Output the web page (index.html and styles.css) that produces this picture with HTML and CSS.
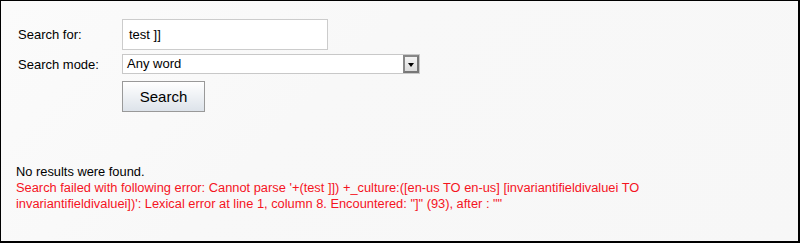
FILE: index.html
```html
<!DOCTYPE html>
<html>
<head>
<meta charset="utf-8">
<link rel="stylesheet" href="styles.css">
</head>
<body>
<div class="frame">
  <div class="form">
    <label class="lbl lbl-for">Search for:</label>
    <div class="textbox">test ]]</div>
    <label class="lbl lbl-mode">Search mode:</label>
    <div class="select">
      <span class="select-text">Any word</span>
      <span class="select-btn"><span class="arrow"></span></span>
    </div>
    <div class="spacer"></div>
    <button class="btn">Search</button>
  </div>
  <div class="results">
    <div class="none">No results were found.</div>
    <div class="error">Search failed with following error: Cannot parse '+(test ]]) +_culture:([en-us TO en-us] [invariantifieldivaluei TO invariantifieldivaluei])': Lexical error at line 1, column 8. Encountered: "]" (93), after : ""</div>
  </div>
</div>
</body>
</html>
```
FILE: styles.css
```css
html, body {
  margin: 0;
  padding: 0;
  background: #f8f8f8;
}
.frame {
  box-sizing: border-box;
  width: 800px;
  height: 243px;
  border-style: solid;
  border-color: #000;
  border-width: 1px 2px 2px 1px;
  background: linear-gradient(135deg, #fbfbfb 0%, #f8f8f8 40%, #f7f7f7 100%);
  font-family: "Liberation Sans", Arial, sans-serif;
  font-size: 13px;
  color: #000;
  padding: 18px 0 0 0;
}
.form {
  display: grid;
  grid-template-columns: 104px auto;
  row-gap: 4px;
  padding-left: 17px;
  align-items: center;
}
.lbl {
  font-size: 13px;
}
.textbox {
  box-sizing: border-box;
  width: 206px;
  height: 31px;
  border: 1px solid #cccccc;
  background: #fff;
  padding: 0 6px;
  line-height: 29px;
  font-size: 13px;
}
.select {
  box-sizing: border-box;
  width: 298px;
  height: 20px;
  border: 1px solid #c8c8c8;
  background: #fff;
  display: flex;
  align-items: center;
  justify-content: space-between;
}
.select-text {
  padding-left: 4px;
  font-size: 13px;
  line-height: 18px;
}
.select-btn {
  box-sizing: border-box;
  width: 16px;
  height: 18px;
  border: 2px solid #777;
  border-top-color: #888;
  border-left-color: #888;
  background: linear-gradient(#f4f4f4, #dcdcdc);
  display: flex;
  align-items: center;
  justify-content: center;
}
.arrow {
  width: 0;
  height: 0;
  border-left: 3px solid transparent;
  border-right: 3px solid transparent;
  border-top: 4px solid #000;
  margin-top: 1px;
}
.spacer {
  height: 1px;
}
.btn {
  box-sizing: border-box;
  width: 83px;
  height: 31px;
  margin-top: 3px;
  border: 1px solid #999;
  border-radius: 0;
  background: linear-gradient(#ffffff, #dde3ea);
  font-family: "Liberation Sans", Arial, sans-serif;
  font-size: 15px;
  color: #000;
  padding: 0;
}
.results {
  margin-top: 52px;
  padding-left: 15px;
  line-height: 16px;
  font-size: 12.85px;
  width: 690px;
}
.error {
  color: #f5141e;
}
```
